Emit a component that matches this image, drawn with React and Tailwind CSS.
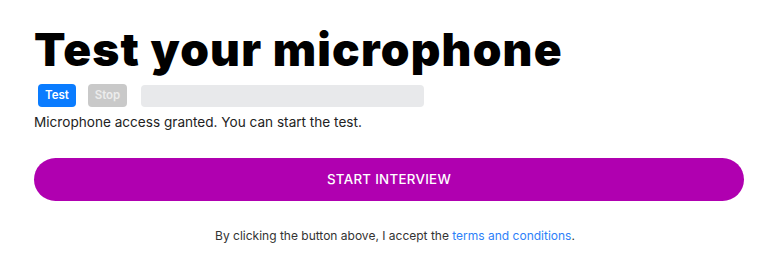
export default function App() {
  return (
    <div className="min-h-screen bg-white px-[34px] pt-[23px] font-['Inter',sans-serif]">
      <h1 className="text-[46px] font-black leading-[53px] tracking-[1.2px] text-black">
        Test your microphone
      </h1>
      <div className="mt-[8px] flex items-center gap-3 pl-[4px]">
        <button className="h-[23px] w-[38px] rounded-[4px] bg-[#0a7cff] text-[11.5px] font-semibold text-white">
          Test
        </button>
        <button className="h-[23px] w-[39px] rounded-[4px] bg-[#c9c9c9] text-[11.5px] font-semibold text-[#ececec]">
          Stop
        </button>
        <div className="ml-[2px] h-[22px] w-[283px] rounded-[4px] bg-[#e8e9eb]" />
      </div>
      <p className="mt-[5px] text-[13.6px] leading-[20px] text-[#222]">
        Microphone access granted. You can start the test.
      </p>
      <button className="mt-[26px] flex h-[43px] w-[710px] items-center justify-center rounded-full bg-[#b000b0] text-[13.3px] font-medium tracking-[0.3px] text-white">
        START INTERVIEW
      </button>
      <p className="mt-[26px] w-[710px] pl-[12px] text-center text-[12px] text-[#333]">
        By clicking the button above, I accept the{" "}
        <a href="#" className="text-[#2d7ff9]">terms and conditions</a>.
      </p>
    </div>
  );
}
